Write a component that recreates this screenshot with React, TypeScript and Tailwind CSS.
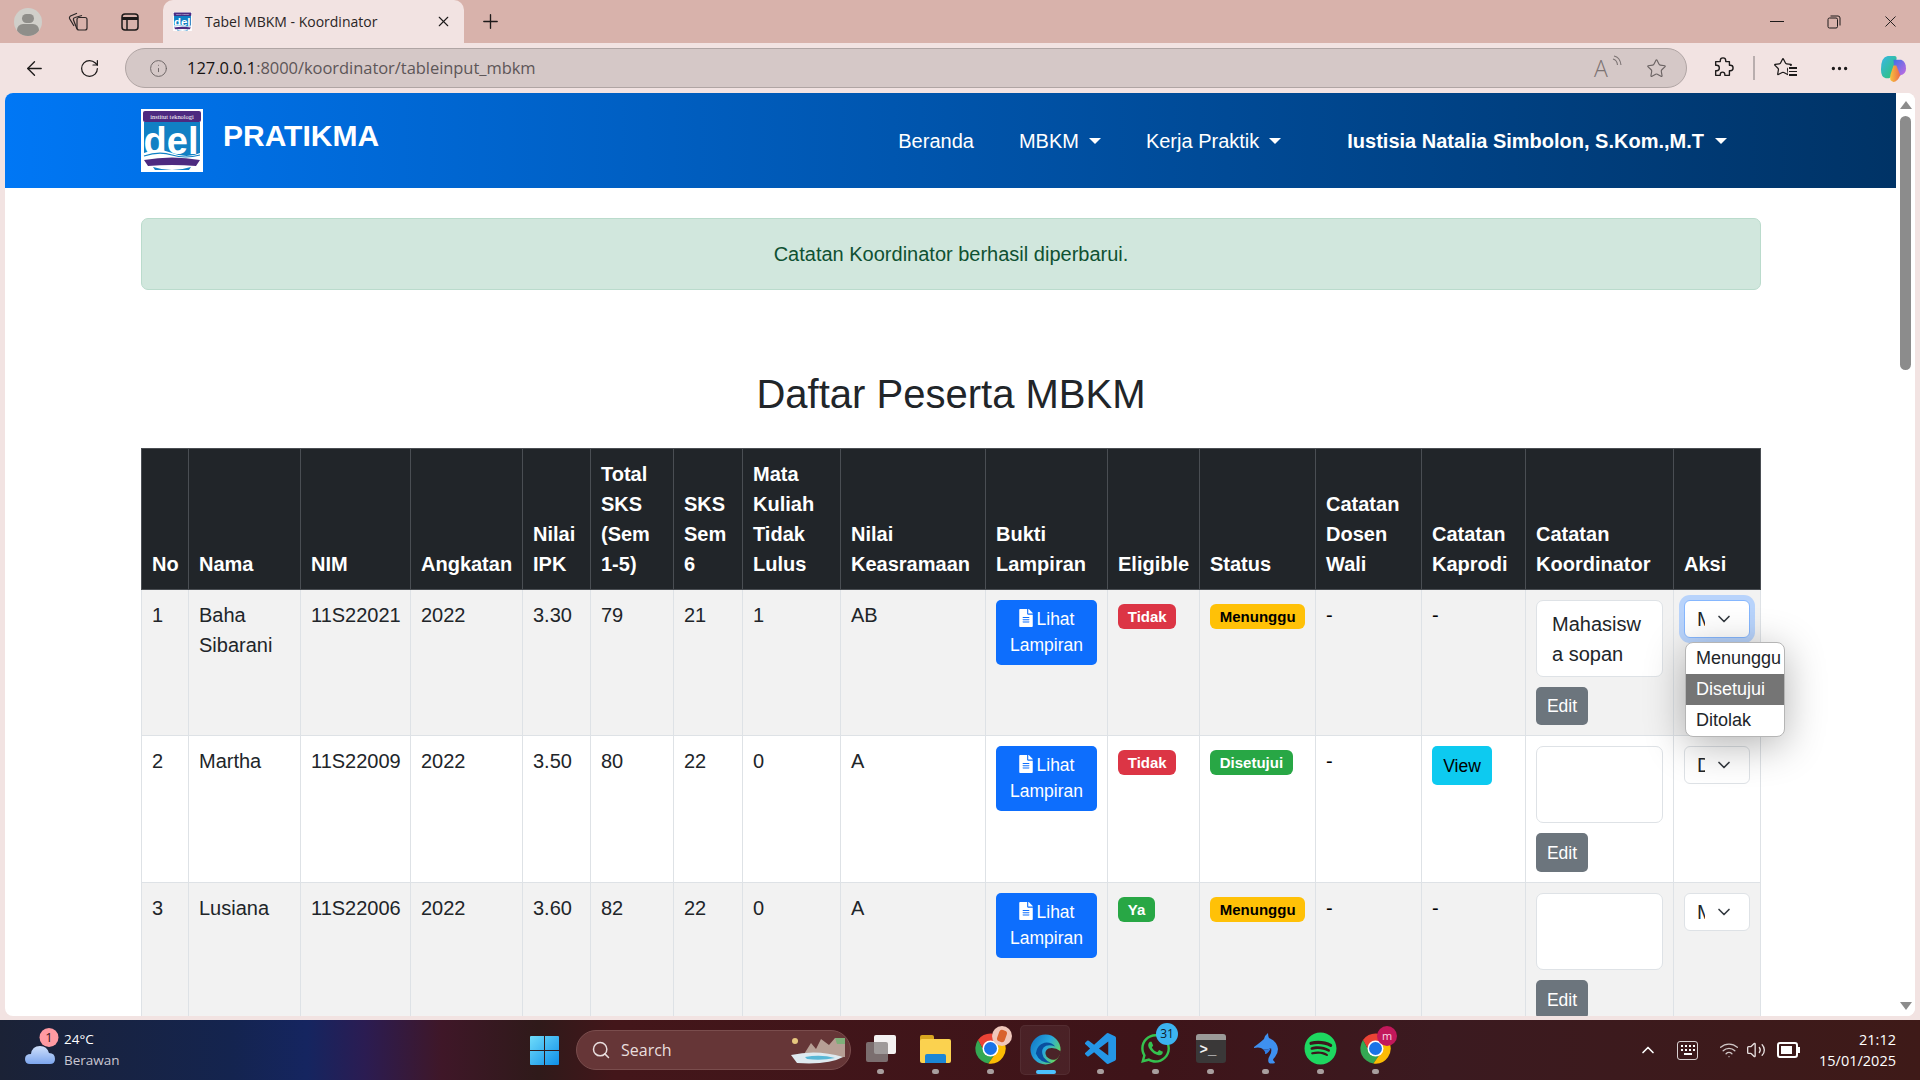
import { ReactNode } from "react";
import { ArrowLeft, ChevronDown, ChevronUp, Info, MoreHorizontal, Plus, RotateCw, Search, Star, Volume2, Wifi, X } from "lucide-react";
import { FaFileAlt, FaSpotify, FaWhatsapp } from "react-icons/fa";

const rows = [
  { no: 1, nama: "Baha Sibarani", nim: "11S22021", ipk: "3.30", sks: 79, sem6: 21, gagal: 1, nilai: "AB", eligible: "Tidak", status: "Menunggu", kaprodi: false, catatan: "Mahasiswa sopan", aksi: "Menunggu" },
  { no: 2, nama: "Martha", nim: "11S22009", ipk: "3.50", sks: 80, sem6: 22, gagal: 0, nilai: "A", eligible: "Tidak", status: "Disetujui", kaprodi: true, catatan: "", aksi: "Disetujui" },
  { no: 3, nama: "Lusiana", nim: "11S22006", ipk: "3.60", sks: 82, sem6: 22, gagal: 0, nilai: "A", eligible: "Ya", status: "Menunggu", kaprodi: false, catatan: "", aksi: "Menunggu" },
];

const colWidths = [47, 112, 110, 112, 68, 83, 69, 98, 145, 122, 92, 116, 106, 104, 148, 87];
const headers = ["No", "Nama", "NIM", "Angkatan", "Nilai IPK", "Total SKS (Sem 1-5)", "SKS Sem 6", "Mata Kuliah Tidak Lulus", "Nilai Keasramaan", "Bukti Lampiran", "Eligible", "Status", "Catatan Dosen Wali", "Catatan Kaprodi", "Catatan Koordinator", "Aksi"];

const td = "border border-[#dee2e6] p-[10px] align-top text-[#212529]";

function DelLogo({ className }: { className: string }) {
  return (
    <svg viewBox="0 0 62 63" className={className}>
      <rect width="62" height="63" fill="#fff" />
      <rect x="2" y="2" width="58" height="11" rx="2" fill="#4d2a80" />
      <text x="31" y="10" textAnchor="middle" fontSize="6.4" fontFamily="Liberation Serif, serif" fill="#fff">institut teknologi</text>
      <rect x="3" y="13" width="56" height="36" fill="#1180c4" />
      <text x="30" y="45" textAnchor="middle" fontSize="38" fontWeight="700" fontFamily="Liberation Sans, sans-serif" fill="#fff">del</text>
      <path d="M3 44 Q16 38 31 44 T59 44 V50 H3 Z" fill="#fff" />
      <path d="M3 47 Q18 42 31 46 T59 46" stroke="#1180c4" strokeWidth="1.2" fill="none" />
      <path d="M3 51 Q31 46 59 51 L55 57 Q31 55 7 57 Z" fill="#4d2a80" />
      <path d="M12 58 Q31 64 50 58 L48 61 H14 Z" fill="#1180c4" />
    </svg>
  );
}

function Chrome({ className }: { className: string }) {
  return (
    <svg viewBox="0 0 24 24" className={className}>
      <path d="M12 7 L21.5 6.5 A11 11 0 0 0 2.9 5.8 L7.7 14.5 Z" fill="#ea4335" />
      <path d="M7.7 14.5 L2.9 5.8 A11 11 0 0 0 10.5 22.9 L16.3 14.5 Z" fill="#34a853" />
      <path d="M16.3 14.5 L10.5 22.9 A11 11 0 0 0 21.5 6.5 L12 7 Z" fill="#fbbc04" />
      <circle cx="12" cy="12" r="5.8" fill="#fff" />
      <circle cx="12" cy="12" r="4.7" fill="#1a73e8" />
    </svg>
  );
}

function Dot({ active }: { active?: boolean }) {
  return active ? <div className="w-[20px] h-[4px] rounded-full bg-[#4cc2ff]" /> : <div className="w-[7px] h-[5px] rounded-full bg-[#a89e9e]" />;
}

function TaskIcon({ children, active }: { children: ReactNode; active?: boolean }) {
  return (
    <div className="relative w-[55px] h-[52px] flex flex-col items-center justify-end pb-[2px]">
      {active && <div className="absolute left-[2px] top-[1px] w-[50px] h-[50px] rounded-[5px] bg-white/[0.06] border border-white/[0.05]" />}
      <div className="relative flex-1 flex items-center justify-center pt-[4px]">{children}</div>
      <div className="relative">
        <Dot active={active} />
      </div>
    </div>
  );
}

function StatusBadge({ label }: { label: string }) {
  const cls = label === "Menunggu" ? "bg-[#ffc107] text-black" : label === "Disetujui" || label === "Ya" ? "bg-[#28a745] text-white" : "bg-[#dc3545] text-white";
  return <span className={`inline-block rounded-[6px] px-[9.75px] py-[5px] text-[15px] font-bold leading-none ${cls}`}>{label}</span>;
}

export default function App() {
  return (
    <div className="h-screen w-full overflow-hidden flex flex-col bg-[#f2e3e2] font-['Liberation_Sans',Arial,sans-serif]">
      {/* Tab strip */}
      <div className="h-[43px] shrink-0 flex items-center bg-[#d8b2ab] text-[#1d1a1a]">
        <div className="ml-[14px] w-[28px] h-[28px] rounded-full bg-[#d0cfca] overflow-hidden flex flex-col items-center">
          <div className="w-[12px] h-[12px] rounded-full bg-[#8f8e8a] mt-[6px]" />
          <div className="w-[22px] h-[14px] rounded-full bg-[#8f8e8a] mt-[1px]" />
        </div>
        <svg viewBox="0 0 22 20" className="ml-[25px] w-[22px] h-[20px]" fill="none" stroke="#2b2626" strokeWidth="1.2">
          <rect x="10" y="5.5" width="10" height="12.5" rx="2" />
          <path d="M10 17 L6.5 8 Q6 6 8 5.5 L15 3.5" />
          <path d="M7 14 L2.5 6.5 Q2 5 3.5 4 L10 1.2" />
        </svg>
        <svg viewBox="0 0 20 20" className="ml-[31px] w-[20px] h-[20px]" fill="none" stroke="#1d1a1a" strokeWidth="1.5">
          <rect x="2" y="2" width="16" height="16" rx="3" />
          <path d="M2 6.5 H18" strokeWidth="3" />
          <path d="M7 6 V18" />
        </svg>
        <div className="ml-[23px] w-[301px] h-[43px] self-end rounded-t-[10px] bg-[#f2e3e2] flex items-center pl-[10px] pr-[12px]">
          <DelLogo className="w-[19px] h-[19px]" />
          <span className="ml-[13px] text-[14px] font-['Open_Sans',sans-serif] text-[#2a2525] whitespace-nowrap">Tabel MBKM - Koordinator</span>
          <X size={17} strokeWidth={1.5} className="ml-auto" />
        </div>
        <Plus size={23} strokeWidth={1.4} className="ml-[15px]" />
        <div className="ml-auto flex items-center">
          <div className="w-[14px] h-[1.5px] bg-[#1d1a1a]" />
          <svg viewBox="0 0 14 14" className="ml-[43px] w-[14px] h-[14px]" fill="none" stroke="#1d1a1a" strokeWidth="1">
            <rect x="1" y="3" width="9.5" height="10" rx="1.5" />
            <path d="M3.5 1 H11 Q13 1 13 3 V10.5" />
          </svg>
          <X size={19} strokeWidth={1.2} className="ml-[40px] mr-[20px]" />
        </div>
      </div>

      {/* Address bar row */}
      <div className="h-[50px] shrink-0 flex items-center text-[#1d1a1a]">
        <ArrowLeft size={23} strokeWidth={1.4} className="ml-[23px]" />
        <RotateCw size={21} strokeWidth={1.4} className="ml-[33px]" />
        <div className="ml-[25px] w-[1562px] h-[40px] rounded-full bg-[#d5c8c7] border border-[#b0a5a4] flex items-center pl-[22px] pr-[19px]">
          <Info size={19} strokeWidth={1.2} className="text-[#6c6464] ml-[1px]" />
          <span className="ml-[19px] text-[16.5px] font-['Open_Sans',sans-serif] tracking-[-0.05px] text-[#5d5658]">
            <span className="text-[#161313]">127.0.0.1</span>:8000/koordinator/tableinput_mbkm
          </span>
          <div className="ml-auto flex items-center">
            <div className="relative w-[24px] h-[26px] text-[#7c7373] text-[23px] leading-[26px] font-['Open_Sans',sans-serif] font-light">
              A
              <svg viewBox="0 0 12 12" className="absolute right-[-5px] top-[0px] w-[12px] h-[12px]" fill="none" stroke="currentColor" strokeWidth="1.1">
                <path d="M3 1 Q9 2 10 10" />
                <path d="M2 4 Q6 5 6.5 10" />
              </svg>
            </div>
            <Star size={21} strokeWidth={1.3} className="ml-[28px] text-[#6c6464]" />
          </div>
        </div>
        <svg viewBox="0 0 24 24" className="ml-[25px] w-[22px] h-[22px]" fill="none" stroke="#1d1a1a" strokeWidth="1.5">
          <path d="M9 4 a3 3 0 0 1 6 0 v1 h4 v4 h1 a3 3 0 0 1 0 6 h-1 v5 h-5 v-1 a2.5 2.5 0 0 0 -5 0 v1 H4 v-5 h1 a3 3 0 0 0 0 -6 H4 V5 h5 Z" strokeLinejoin="round" />
        </svg>
        <div className="ml-[19px] w-[1.5px] h-[24px] bg-[#b9aeae]" />
        <div className="ml-[18px] relative w-[22px] h-[22px]">
          <Star size={20} strokeWidth={1.5} />
          <div className="absolute right-[-2px] top-[9px] flex flex-col gap-[2px] bg-[#f2e3e2] pl-[1px] py-[1px]">
            <div className="w-[8px] h-[1.5px] bg-[#1d1a1a]" />
            <div className="w-[8px] h-[1.5px] bg-[#1d1a1a]" />
            <div className="w-[8px] h-[1.5px] bg-[#1d1a1a]" />
          </div>
        </div>
        <MoreHorizontal size={21} strokeWidth={1.8} className="ml-[34px]" />
        <svg viewBox="0 0 28 30" className="ml-[30px] w-[27px] h-[29px]">
          <defs>
            <linearGradient id="cpA" x1="0" y1="0" x2="1" y2="1">
              <stop offset="0" stopColor="#38b6e8" />
              <stop offset="1" stopColor="#2fc46b" />
            </linearGradient>
            <linearGradient id="cpB" x1="0" y1="0" x2="1" y2="1">
              <stop offset="0" stopColor="#3f6fe8" />
              <stop offset="1" stopColor="#c86ae0" />
            </linearGradient>
            <linearGradient id="cpC" x1="0" y1="0" x2="1" y2="0">
              <stop offset="0" stopColor="#f6c33c" />
              <stop offset="1" stopColor="#ef6a4a" />
            </linearGradient>
          </defs>
          <path d="M8 2 H15 Q18 2 17 6 L12 22 Q11 26 6 25 Q1 24 1 16 Q1 3 8 2 Z" fill="url(#cpA)" />
          <path d="M14 6 H22 Q27 8 27 15 Q27 21 21 22 H15 Z" fill="url(#cpB)" />
          <path d="M11 21 L14 12 H17 L21 22 Q18 29 14 29 Q9 28 11 21 Z" fill="url(#cpC)" />
        </svg>
      </div>

      {/* Page */}
      <div className="h-[923px] shrink-0 mx-[5px] flex rounded-[8px] overflow-hidden bg-white">
        <div className="flex-1 min-w-0">
          <nav className="h-[95px] bg-linear-to-r from-[#0077f5] to-[#003366] pl-[136px] pr-[169px] flex text-white">
            <div className="flex h-[95px]">
              <DelLogo className="mt-[16px] w-[62px] h-[63px]" />
              <span className="ml-[20px] mt-[26px] h-[34px] text-[30px] leading-[34px] font-bold">PRATIKMA</span>
            </div>
            <div className="ml-auto flex items-center text-[20px]">
              <span>Beranda</span>
              <span className="ml-[45px]">MBKM</span>
              <div className="ml-[10px] w-0 h-0 border-x-[6.5px] border-x-transparent border-t-[6px] border-t-white" />
              <span className="ml-[45px]">Kerja Praktik</span>
              <div className="ml-[10px] w-0 h-0 border-x-[6.5px] border-x-transparent border-t-[6px] border-t-white" />
              <span className="ml-[66px] font-bold">Iustisia Natalia Simbolon, S.Kom.,M.T</span>
              <div className="ml-[11px] w-0 h-0 border-x-[6.5px] border-x-transparent border-t-[6px] border-t-white" />
            </div>
          </nav>

          <main className="w-[1620px] ml-[136px]">
            <div className="mt-[30px] h-[72px] rounded-[7px] border border-[#badbcc] bg-[#d1e7dd] text-[#0f5132] text-[20px] leading-[30px] flex items-center justify-center">
              Catatan Koordinator berhasil diperbarui.
            </div>
            <h2 className="mt-[80px] mb-[30px] text-[40px] leading-[48px] text-center text-[#212529]">Daftar Peserta MBKM</h2>

            <table className="w-[1619px] table-fixed border-collapse text-[20px] leading-[30px]">
              <colgroup>
                {colWidths.map((w, i) => (
                  <col key={i} style={{ width: w }} />
                ))}
              </colgroup>
              <thead>
                <tr className="bg-[#212529] text-white">
                  {headers.map((h) => (
                    <th key={h} className="border border-[#4a4e53] p-[10px] align-bottom text-left font-bold">
                      {h}
                    </th>
                  ))}
                </tr>
              </thead>
              <tbody>
                {rows.map((r, i) => (
                  <tr key={r.no} className={i % 2 === 0 ? "bg-[#f2f2f2]" : "bg-white"}>
                    <td className={td}>{r.no}</td>
                    <td className={td}>{r.nama}</td>
                    <td className={td}>{r.nim}</td>
                    <td className={td}>2022</td>
                    <td className={td}>{r.ipk}</td>
                    <td className={td}>{r.sks}</td>
                    <td className={td}>{r.sem6}</td>
                    <td className={td}>{r.gagal}</td>
                    <td className={td}>{r.nilai}</td>
                    <td className={td}>
                      <div className="rounded-[5px] bg-[#0d6efd] text-white text-[17.5px] leading-[26.25px] text-center px-[10px] py-[6px]">
                        <FaFileAlt className="inline-block w-[14px] h-[18px] mr-[4px] align-[-2px]" />
                        Lihat Lampiran
                      </div>
                    </td>
                    <td className={td}>
                      <StatusBadge label={r.eligible} />
                    </td>
                    <td className={td}>
                      <StatusBadge label={r.status} />
                    </td>
                    <td className={`${td} text-black`}>-</td>
                    <td className={`${td} text-black`}>
                      {r.kaprodi ? (
                        <div className="w-[60px] h-[39px] rounded-[5px] bg-[#0dcaf0] text-black text-[17.5px] flex items-center justify-center">View</div>
                      ) : (
                        "-"
                      )}
                    </td>
                    <td className={td}>
                      <textarea
                        readOnly
                        defaultValue={r.catatan}
                        className="block w-[127px] h-[77px] resize-none overflow-hidden rounded-[7px] border border-[#dee2e6] bg-white px-[15px] py-[8px] text-[20px] leading-[30px] text-[#212529] outline-none"
                      />
                      <div className={`mt-[10px] w-[52px] rounded-[5px] bg-[#6c757d] text-white text-[17.5px] flex items-center justify-center ${r.no === 1 ? "h-[38px]" : "h-[39px]"}`}>Edit</div>
                    </td>
                    <td className={td}>
                      <div className="relative w-[66px] h-[38px]">
                        <select
                          defaultValue={r.aksi}
                          className={`block w-[66px] h-[38px] appearance-none rounded-[6px] bg-white pl-[12px] pr-[44px] text-[20px] text-[#212529] outline-none border ${
                            r.no === 1 ? "border-[#86b7fe] shadow-[0_0_0_5px_#b8d3fb]" : "border-[#dee2e6]"
                          }`}
                        >
                          <option>Menunggu</option>
                          <option>Disetujui</option>
                          <option>Ditolak</option>
                        </select>
                        <ChevronDown size={20} strokeWidth={2} className="absolute left-[30px] top-[9px] text-[#343a40] pointer-events-none" />
                        {r.no === 1 && (
                          <div className="absolute left-[1px] top-[42px] z-10 w-[100px] h-[95px] overflow-hidden rounded-[8px] border border-[#b5b5b5] bg-white text-[18px] leading-[31px] shadow-[0_8px_40px_rgba(0,0,0,0.3)] whitespace-nowrap">
                            <div className="pl-[10px]">Menunggu</div>
                            <div className="pl-[10px] bg-[#757575] text-white">Disetujui</div>
                            <div className="pl-[10px]">Ditolak</div>
                          </div>
                        )}
                      </div>
                    </td>
                  </tr>
                ))}
              </tbody>
            </table>
          </main>
        </div>

        {/* Scrollbar */}
        <div className="w-[19px] shrink-0 flex flex-col items-center bg-white">
          <div className="mt-[8px] w-0 h-0 border-x-[6px] border-x-transparent border-b-[8px] border-b-[#8c8c8c]" />
          <div className="mt-[7px] w-[11px] h-[254px] rounded-full bg-[#8c8c8c]" />
          <div className="mt-auto mb-[6px] w-0 h-0 border-x-[6px] border-x-transparent border-t-[8px] border-t-[#8c8c8c]" />
        </div>
      </div>

      {/* Taskbar */}
      <div className="mt-[4px] flex-1 flex items-center bg-[linear-gradient(90deg,#1b2236_0%,#14244f_12%,#152560_16%,#2b1c52_19%,#3f1728_23%,#2f1a1a_28%,#43161a_32%,#3e1419_60%,#3b1a20_75%,#3e1a18_100%)] text-white">
        <div className="w-[530px] shrink-0 flex items-center pl-[25px]">
          <svg viewBox="0 0 32 38" className="w-[32px] h-[38px] mt-[-6px] overflow-visible">
            <defs>
              <linearGradient id="cloudG" x1="0" y1="0" x2="0" y2="1">
                <stop offset="0" stopColor="#cfe0fb" />
                <stop offset="1" stopColor="#7da6ee" />
              </linearGradient>
            </defs>
            <path d="M5 36 Q0 36 0 31 Q0 26 6 26 Q7 18 15 18 Q22 18 24 25 Q30 25 30 31 Q30 36 25 36 Z" fill="url(#cloudG)" />
            <circle cx="24" cy="9.5" r="9.5" fill="#ff9aa2" />
            <text x="24" y="14" textAnchor="middle" fontSize="13" fontFamily="Open Sans, sans-serif" fill="#3a1518">1</text>
          </svg>
          <div className="ml-[7px] font-['Open_Sans',sans-serif] text-[13.5px] leading-[21px]">
            <div>24°C</div>
            <div className="text-[#c9c6d2]">Berawan</div>
          </div>
        </div>

        <svg viewBox="0 0 29 29" className="w-[29px] h-[29px] shrink-0">
          <defs>
            <linearGradient id="winG" x1="0" y1="0" x2="1" y2="1">
              <stop offset="0" stopColor="#6fdcfa" />
              <stop offset="1" stopColor="#0f8fe8" />
            </linearGradient>
          </defs>
          <path d="M0 1 Q0 0 1 0 H14 V14 H0 Z M15 0 H28 Q29 0 29 1 V14 H15 Z M0 15 H14 V29 H1 Q0 29 0 28 Z M15 15 H29 V28 Q29 29 28 29 H15 Z" fill="url(#winG)" />
        </svg>

        <div className="ml-[17px] w-[275px] h-[40px] shrink-0 rounded-full bg-[#663637] border border-[#7a4d4d] flex items-center pl-[14px] pr-[3px] text-[#e9dede]">
          <Search size={20} strokeWidth={1.8} />
          <span className="ml-[10px] text-[16px] font-['Open_Sans',sans-serif]">Search</span>
          <svg viewBox="0 0 58 30" className="ml-auto w-[58px] h-[30px]">
            <circle cx="6" cy="6" r="3" fill="#e7c77e" />
            <path d="M12 24 L22 8 L27 14 L32 4 L40 10 L46 3 L56 3 L56 22 Z" fill="#b79f95" />
            <path d="M46 3 H56 V9 H48 Z" fill="#7fb07a" />
            <path d="M2 20 Q28 14 54 22 Q40 30 8 28 Z" fill="#dfeaf0" />
            <path d="M16 22 Q32 19 46 23 Q32 26 18 24 Z" fill="#58b7d6" />
          </svg>
        </div>

        <div className="ml-[2px] flex items-center">
          <TaskIcon>
            <div className="relative w-[30px] h-[27px]">
              <div className="absolute left-[8px] top-0 w-[22px] h-[19px] rounded-[2px] bg-[#f4f1f1]" />
              <div className="absolute left-0 top-[7px] w-[22px] h-[20px] rounded-[2px] bg-[#8a8585]/80" />
            </div>
          </TaskIcon>
          <TaskIcon>
            <div className="relative w-[31px] h-[28px]">
              <div className="absolute left-0 top-0 w-[14px] h-[6px] rounded-t-[2px] bg-[#d9a520]" />
              <div className="absolute left-0 top-[4px] w-[31px] h-[24px] rounded-[2px] bg-[#fbd24f]" />
              <div className="absolute left-[5px] top-[19px] w-[21px] h-[9px] rounded-t-[2px] bg-[#1b86d6]" />
            </div>
          </TaskIcon>
          <TaskIcon>
            <div className="relative">
              <Chrome className="w-[33px] h-[33px]" />
              <div className="absolute right-[-5px] top-[-6px] w-[20px] h-[20px] rounded-full bg-[#f0c7bb] flex items-center justify-center">
                <div className="w-[8px] h-[12px] rounded-[3px] rotate-[20deg] bg-[#d9622e]" />
              </div>
            </div>
          </TaskIcon>
          <TaskIcon active>
            <svg viewBox="0 0 32 32" className="w-[31px] h-[31px]">
              <defs>
                <linearGradient id="edgeG" x1="0" y1="0" x2="1" y2="0.6">
                  <stop offset="0" stopColor="#0f6fc0" />
                  <stop offset="0.55" stopColor="#27a7df" />
                  <stop offset="1" stopColor="#66d860" />
                </linearGradient>
              </defs>
              <circle cx="16" cy="16" r="15.5" fill="url(#edgeG)" />
              <path d="M32 18 Q25 13 19 15 Q14 18 17 23 Q21 28 27 26 Q31 23 32 18 Z" fill="#4a2328" />
              <path d="M6 20 Q7 11 15 9 Q22 8 26 13 Q18 10 14 14 Q11 18 14 24 Q17 28 22 30 Q10 30 6 20 Z" fill="#0a4f9e" />
            </svg>
          </TaskIcon>
          <TaskIcon>
            <svg viewBox="0 0 24 24" className="w-[31px] h-[31px]">
              <path
                fill="#2496e6"
                d="M23.15 2.587L18.21.21a1.494 1.494 0 0 0-1.705.29l-9.46 8.63-4.12-3.128a.999.999 0 0 0-1.276.057L.327 7.261A1 1 0 0 0 .326 8.74L3.899 12 .326 15.26a1 1 0 0 0 .001 1.479L1.65 17.94a.999.999 0 0 0 1.276.057l4.12-3.128 9.46 8.63a1.492 1.492 0 0 0 1.704.29l4.942-2.377A1.5 1.5 0 0 0 24 20.06V3.939a1.5 1.5 0 0 0-.85-1.352zm-5.146 14.861L10.826 12l7.178-5.448v10.896z"
              />
            </svg>
          </TaskIcon>
          <TaskIcon>
            <div className="relative">
              <FaWhatsapp size={33} className="text-[#35c24f]" />
              <div className="absolute right-[-6px] top-[-9px] w-[22px] h-[22px] rounded-full bg-[#3cb4f0] text-[#10202c] text-[12px] leading-[22px] text-center font-['Open_Sans',sans-serif]">31</div>
            </div>
          </TaskIcon>
          <TaskIcon>
            <div className="w-[30px] h-[29px] rounded-[3px] bg-[#3a3838] overflow-hidden">
              <div className="h-[6px] bg-[#9b9a98]" />
              <div className="flex items-end pl-[4px] pt-[3px] text-[#f1f1f1] text-[14px] leading-[15px] font-bold font-['Liberation_Mono',monospace]">
                {">_"}
              </div>
            </div>
          </TaskIcon>
          <TaskIcon>
            <svg viewBox="0 0 26 32" className="w-[26px] h-[32px]">
              <path d="M1 14 L5 11 Q9 8 11 6 Q12 2 15 0 Q15 3 16 5 Q24 8 25 16 Q25 20 22 24 Q20 26 20 27 Q22 29 22 30 Q18 31 16 30 Q14 27 17 22 Q19 19 18 15 Q12 18 8 15 Q5 14 1 15 Z" fill="#3e90f0" />
              <path d="M8 15 Q12 18 18 15 Q15 21 12 21 Q13 18 8 15 Z" fill="#2f7fe8" />
            </svg>
          </TaskIcon>
          <TaskIcon>
            <FaSpotify size={33} className="text-[#1ed760]" />
          </TaskIcon>
          <TaskIcon>
            <div className="relative">
              <Chrome className="w-[33px] h-[33px]" />
              <div className="absolute right-[-5px] top-[-6px] w-[20px] h-[20px] rounded-full bg-[#c2185b] text-[#f7dbe6] text-[11px] leading-[19px] text-center font-['Open_Sans',sans-serif]">m</div>
            </div>
          </TaskIcon>
        </div>

        <div className="ml-auto flex items-center pr-[24px]">
          <ChevronUp size={20} strokeWidth={2} />
          <div className="ml-[19px] w-[21px] h-[19px] rounded-[3px] border border-white/80 flex flex-col items-center justify-center gap-[2px]">
            <div className="w-[14px] h-[2px] border-t-2 border-dotted border-white" />
            <div className="w-[14px] h-[2px] border-t-2 border-dotted border-white" />
            <div className="w-[8px] h-[2px] bg-white" />
          </div>
          <Wifi size={20} strokeWidth={1.6} className="ml-[21px] text-[#cfc6c6]" />
          <Volume2 size={20} strokeWidth={1.6} className="ml-[7px] text-[#e6dede]" />
          <div className="ml-[11px] relative w-[21px] h-[16px] rounded-[3px] border-2 border-white flex items-center pl-[2px]">
            <div className="w-[11px] h-[8px] bg-white" />
            <div className="absolute right-[-4px] top-[3px] w-[2px] h-[6px] bg-white" />
          </div>
          <div className="ml-[21px] text-right font-['Open_Sans',sans-serif] text-[14.5px] leading-[21px]">
            <div>21:12</div>
            <div>15/01/2025</div>
          </div>
        </div>
      </div>
    </div>
  );
}
